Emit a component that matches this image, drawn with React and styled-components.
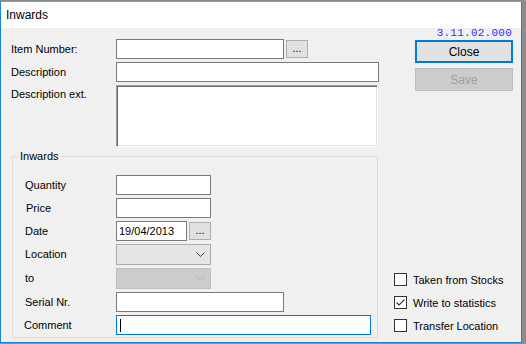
import React from 'react';
import styled, { createGlobalStyle } from 'styled-components';

const GlobalStyle = createGlobalStyle`
  html, body {
    margin: 0;
    padding: 0;
    background: #8c8c8c;
  }
  body {
    width: 526px;
    height: 344px;
    overflow: hidden;
    font-family: "Liberation Sans", Arial, sans-serif;
    font-size: 11px;
    color: #000;
  }
`;

const Window = styled.div`
  box-sizing: border-box;
  margin-top: 1px;
  width: 522px;
  height: 342px;
  border: 1px solid #1883d7;
  border-top-color: #6aa6dc;
  background: #f0f0f0;
  display: flex;
  flex-direction: column;
`;

const TitleBar = styled.div`
  height: 26px;
  flex: none;
  background: #fff;
  display: flex;
  align-items: center;
  padding-left: 5px;
  font-size: 12px;
`;

const Body = styled.div`
  flex: 1;
  display: flex;
  gap: 15px;
  padding: 0 8px 0 10px;
`;

const LeftCol = styled.div`
  width: 368px;
  padding-top: 11px;
  display: flex;
  flex-direction: column;
`;

const TopGrid = styled.div`
  display: grid;
  grid-template-columns: 105px 1fr;
  row-gap: 3px;
  align-items: center;
`;

const Label = styled.div`
  font-size: 11px;
  line-height: 13px;
  align-self: ${(p) => (p.top ? 'start' : 'center')};
  padding-top: ${(p) => (p.top ? '3px' : '0')};
  margin-left: ${(p) => p.indent || 0}px;
`;

const FieldRow = styled.div`
  display: flex;
  align-items: center;
  gap: 2px;
`;

const TextBox = styled.div`
  box-sizing: border-box;
  width: ${(p) => p.w}px;
  height: 20px;
  background: #fff;
  border: 1px solid ${(p) => (p.focused ? '#0078d7' : '#7a7a7a')};
  font-size: 11px;
  line-height: 18px;
  padding-left: 2px;
  display: flex;
  align-items: center;
`;

const Caret = styled.span`
  width: 1px;
  height: 13px;
  background: #000;
  margin-left: 1px;
`;

const MultiLine = styled.div`
  box-sizing: border-box;
  width: 262px;
  height: 62px;
  background: #fff;
  border: 1px solid;
  border-color: #a0a0a0 #ffffff #ffffff #a0a0a0;
  box-shadow: inset 1px 1px 0 #696969, inset -1px -1px 0 #e3e3e3;
`;

const DotsButton = styled.div`
  box-sizing: border-box;
  width: 22px;
  height: 18px;
  background: #e1e1e1;
  border: 1px solid #adadad;
  font-size: 11px;
  line-height: 14px;
  text-align: center;
`;

const GroupBox = styled.fieldset`
  box-sizing: border-box;
  width: 366px;
  height: 188px;
  margin: 3px 0 0 1px;
  padding: 11px 0 0 12px;
  border: 1px solid #dcdcdc;
  min-width: 0;
`;

const Legend = styled.legend`
  margin-left: -7px;
  padding: 0 2px;
  font-size: 11px;
  line-height: 13px;
`;

const GroupGrid = styled.div`
  display: grid;
  grid-template-columns: 91px auto;
  row-gap: 3px;
  align-items: center;
  margin-top: 1px;
`;

const Combo = styled.div`
  box-sizing: border-box;
  width: 95px;
  height: 21px;
  background: ${(p) => (p.disabled ? '#cccccc' : '#e5e5e5')};
  border: 1px solid ${(p) => (p.disabled ? '#bfbfbf' : '#acacac')};
  display: flex;
  align-items: center;
  justify-content: flex-end;
  padding-right: 5px;
`;

const RightCol = styled.div`
  width: 119px;
  display: flex;
  flex-direction: column;
  align-items: stretch;
`;

const Version = styled.div`
  align-self: flex-end;
  margin-right: 1px;
  font-family: "Liberation Mono", "Courier New", monospace;
  font-size: 11px;
  letter-spacing: 0.25px;
  line-height: 11px;
  color: #3030ff;
`;

const Button = styled.div`
  box-sizing: border-box;
  align-self: flex-end;
  width: 98px;
  height: 23px;
  margin-top: ${(p) => p.mt}px;
  display: flex;
  align-items: center;
  justify-content: center;
  font-size: 12px;
  background: ${(p) => (p.disabled ? '#cccccc' : '#e1e1e1')};
  color: ${(p) => (p.disabled ? '#a0a0a0' : '#000')};
  border: ${(p) =>
    p.disabled ? '1px solid #bfbfbf' : p.primary ? '2px solid #0078d7' : '1px solid #adadad'};
`;

const CheckList = styled.div`
  margin-top: auto;
  margin-bottom: 10px;
  display: flex;
  flex-direction: column;
  gap: 10px;
`;

const CheckRow = styled.div`
  display: flex;
  align-items: center;
  gap: 6px;
  height: 13px;
  font-size: 11px;
`;

const Box = styled.div`
  box-sizing: border-box;
  width: 13px;
  height: 13px;
  background: #fff;
  border: 1px solid #333;
  display: flex;
  align-items: center;
  justify-content: center;
`;

const Chevron = ({ color }) => (
  <svg width="9" height="5" viewBox="0 0 9 5">
    <polyline points="0.5,0.5 4.5,4.5 8.5,0.5" fill="none" stroke={color} strokeWidth="1" />
  </svg>
);

const Check = () => (
  <svg width="11" height="11" viewBox="0 0 11 11">
    <polyline points="1.5,5.5 4,8 9.5,2.5" fill="none" stroke="#333" strokeWidth="1.1" />
  </svg>
);

const CheckBox = ({ checked, label }) => (
  <CheckRow>
    <Box>{checked && <Check />}</Box>
    <span>{label}</span>
  </CheckRow>
);

export default function App() {
  return (
    <>
      <GlobalStyle />
      <Window>
        <TitleBar>Inwards</TitleBar>
        <Body>
          <LeftCol>
            <TopGrid>
              <Label>Item Number:</Label>
              <FieldRow>
                <TextBox w={168} />
                <DotsButton>...</DotsButton>
              </FieldRow>
              <Label>Description</Label>
              <TextBox w={263} />
              <Label top>Description ext.</Label>
              <MultiLine />
            </TopGrid>

            <GroupBox>
              <Legend>Inwards</Legend>
              <GroupGrid>
                <Label>Quantity</Label>
                <TextBox w={95} />
                <Label indent={1}>Price</Label>
                <TextBox w={95} />
                <Label>Date</Label>
                <FieldRow>
                  <TextBox w={71}>19/04/2013</TextBox>
                  <DotsButton>...</DotsButton>
                </FieldRow>
                <Label>Location</Label>
                <Combo>
                  <Chevron color="#444" />
                </Combo>
                <Label>to</Label>
                <Combo disabled>
                  <Chevron color="#b0b0b0" />
                </Combo>
                <Label>Serial Nr.</Label>
                <TextBox w={168} />
                <Label indent={-1}>Comment</Label>
                <TextBox w={255} focused>
                  <Caret />
                </TextBox>
              </GroupGrid>
            </GroupBox>
          </LeftCol>

          <RightCol>
            <Version>3.11.02.000</Version>
            <Button primary mt={1}>Close</Button>
            <Button disabled mt={5}>Save</Button>
            <CheckList>
              <CheckBox label="Taken from Stocks" />
              <CheckBox checked label="Write to statistics" />
              <CheckBox label="Transfer Location" />
            </CheckList>
          </RightCol>
        </Body>
      </Window>
    </>
  );
}
